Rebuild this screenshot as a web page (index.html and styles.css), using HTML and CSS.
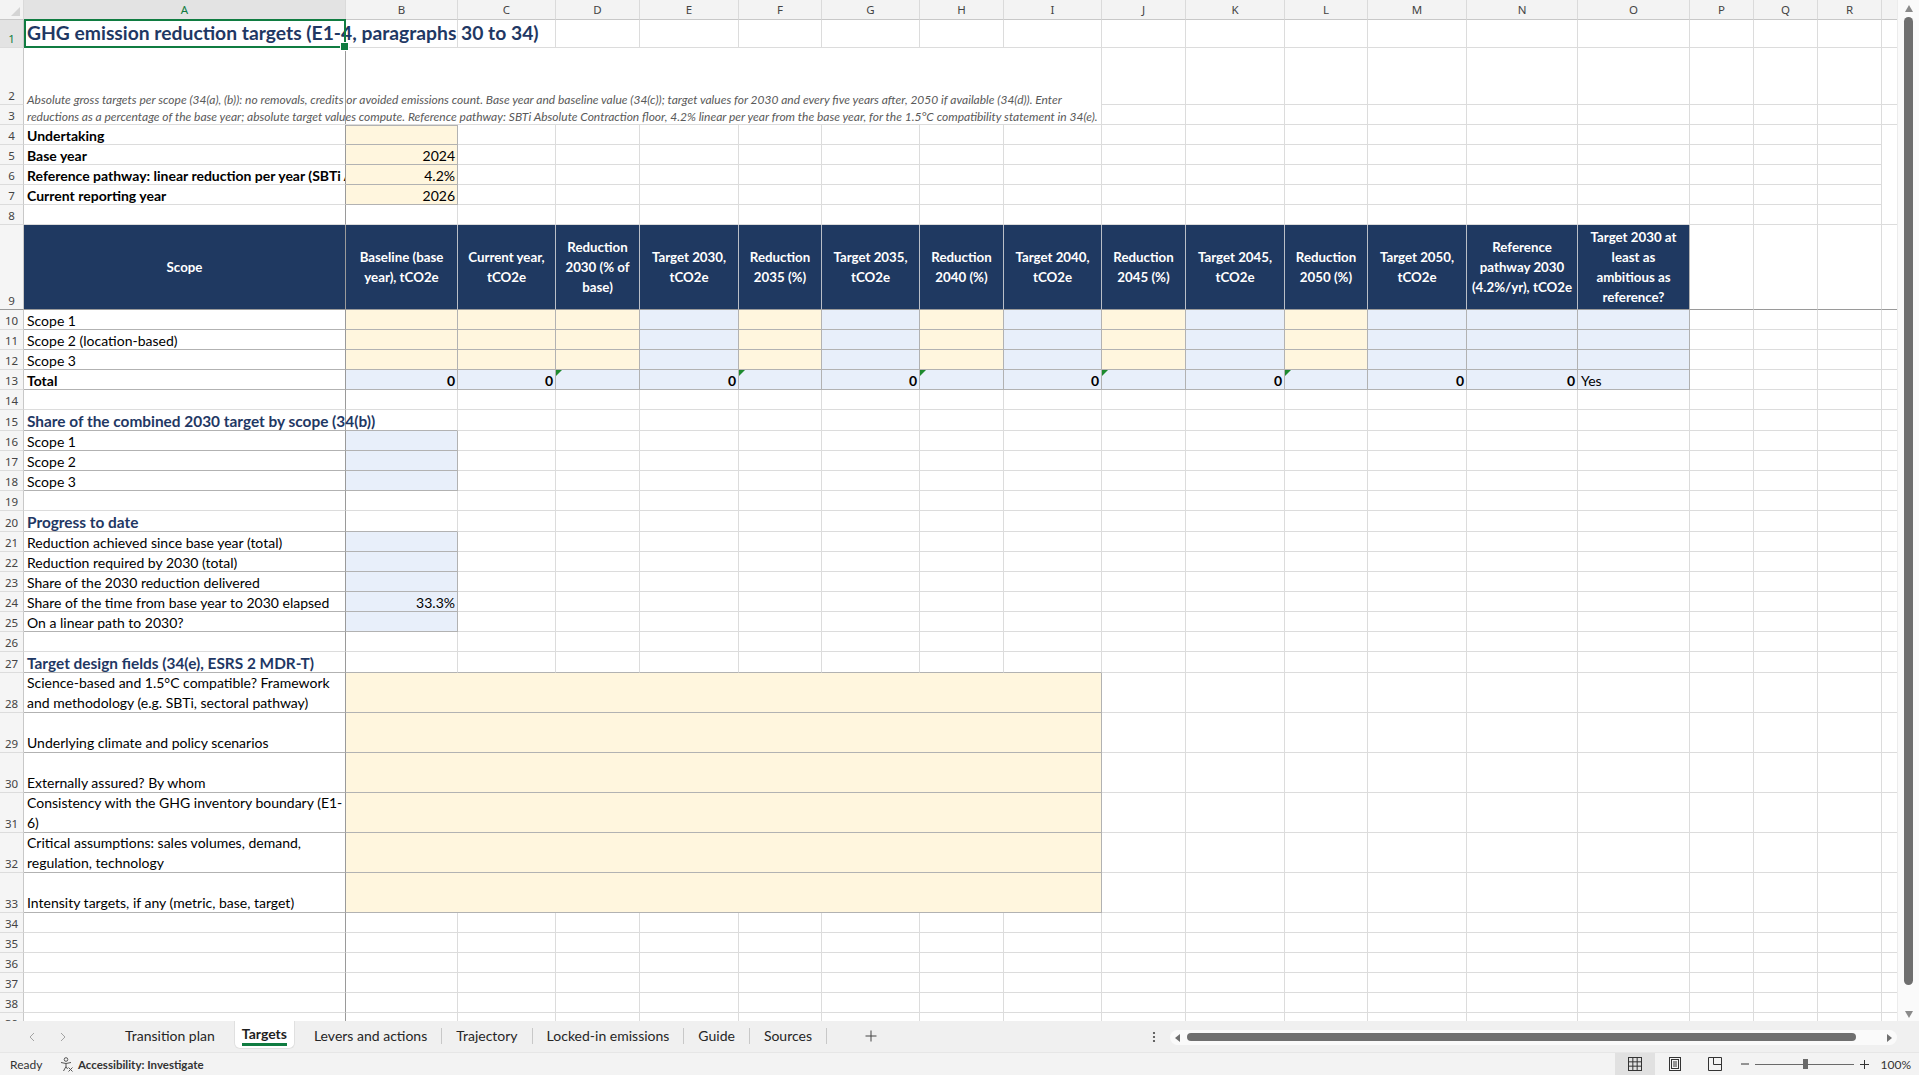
FILE: index.html
```html
<!DOCTYPE html>
<html lang="en">
<head>
<meta charset="utf-8">
<title>Targets</title>
<link rel="stylesheet" href="styles.css">
</head>
<body>
<div class="app">
  <div class="top">
    <div class="sheetwrap">
      <table class="sheet">
        <colgroup>
          <col class="c-rn"><col class="c-a"><col class="c-b"><col class="c-c"><col class="c-d"><col class="c-e"><col class="c-f"><col class="c-g"><col class="c-h"><col class="c-i"><col class="c-j"><col class="c-k"><col class="c-l"><col class="c-m"><col class="c-n"><col class="c-o"><col class="c-p"><col class="c-q"><col class="c-r"><col class="c-s">
        </colgroup>
        <tr class="colhdr">
          <th class="corner"><span class="selall"></span></th><th class="selc">A</th><th>B</th><th>C</th><th>D</th><th>E</th><th>F</th><th>G</th><th>H</th><th>I</th><th>J</th><th>K</th><th>L</th><th>M</th><th>N</th><th>O</th><th>P</th><th>Q</th><th>R</th><th>S</th>
        </tr>
        <tr class="h28">
          <th class="rn selr">1</th><td class="fz title ov sel">GHG emission reduction targets (E1-4, paragraphs 30 to 34)</td><td></td><td></td><td></td><td></td><td></td><td></td><td></td><td></td><td></td><td></td><td></td><td></td><td></td><td></td><td></td><td></td><td></td><td></td>
        </tr>
        <tr class="h57">
          <th class="rn">2</th><td class="note" colspan="9" rowspan="2"><span class="notetext">Absolute gross targets per scope (34(a), (b)): no removals, credits or avoided emissions count. Base year and baseline value (34(c)); target values for 2030 and every five years after, 2050 if available (34(d)). Enter<br>reductions as a percentage of the base year; absolute target values compute. Reference pathway: SBTi Absolute Contraction floor, 4.2% linear per year from the base year, for the 1.5°C compatibility statement in 34(e).</span></td><td></td><td></td><td></td><td></td><td></td><td></td><td></td><td></td><td></td><td></td>
        </tr>
        <tr class="h20">
          <th class="rn">3</th><td></td><td></td><td></td><td></td><td></td><td></td><td></td><td></td><td></td><td></td>
        </tr>
        <tr class="h20">
          <th class="rn">4</th><td class="fz b">Undertaking</td><td class="y bx bt"></td><td></td><td></td><td></td><td></td><td></td><td></td><td></td><td></td><td></td><td></td><td></td><td></td><td></td><td></td><td></td><td></td>
        </tr>
        <tr class="h20">
          <th class="rn">5</th><td class="fz b">Base year</td><td class="y bx num">2024</td><td></td><td></td><td></td><td></td><td></td><td></td><td></td><td></td><td></td><td></td><td></td><td></td><td></td><td></td><td></td><td></td>
        </tr>
        <tr class="h20">
          <th class="rn">6</th><td class="fz b">Reference pathway: linear reduction per year (SBTi Absolute Contraction)</td><td class="y bx num">4.2%</td><td></td><td></td><td></td><td></td><td></td><td></td><td></td><td></td><td></td><td></td><td></td><td></td><td></td><td></td><td></td><td></td>
        </tr>
        <tr class="h20">
          <th class="rn">7</th><td class="fz b">Current reporting year</td><td class="y bx num">2026</td><td></td><td></td><td></td><td></td><td></td><td></td><td></td><td></td><td></td><td></td><td></td><td></td><td></td><td></td><td></td><td></td>
        </tr>
        <tr class="h20">
          <th class="rn">8</th><td class="fz"></td><td></td><td></td><td></td><td></td><td></td><td></td><td></td><td></td><td></td><td></td><td></td><td></td><td></td><td></td><td></td><td></td><td></td><td></td>
        </tr>
        <tr class="h85 frz">
          <th class="rn">9</th><td class="hd fz">Scope</td><td class="hd">Baseline (base<br>year), tCO2e</td><td class="hd">Current year,<br>tCO2e</td><td class="hd">Reduction<br>2030 (% of<br>base)</td><td class="hd">Target 2030,<br>tCO2e</td><td class="hd">Reduction<br>2035 (%)</td><td class="hd">Target 2035,<br>tCO2e</td><td class="hd">Reduction<br>2040 (%)</td><td class="hd">Target 2040,<br>tCO2e</td><td class="hd">Reduction<br>2045 (%)</td><td class="hd">Target 2045,<br>tCO2e</td><td class="hd">Reduction<br>2050 (%)</td><td class="hd">Target 2050,<br>tCO2e</td><td class="hd">Reference<br>pathway 2030<br>(4.2%/yr), tCO2e</td><td class="hd hd-last">Target 2030 at<br>least as<br>ambitious as<br>reference?</td><td></td><td></td><td></td><td></td>
        </tr>
        <tr class="h20">
          <th class="rn">10</th><td class="fz bx">Scope 1</td><td class="y bx"></td><td class="y bx"></td><td class="y bx"></td><td class="bl bx"></td><td class="y bx"></td><td class="bl bx"></td><td class="y bx"></td><td class="bl bx"></td><td class="y bx"></td><td class="bl bx"></td><td class="y bx"></td><td class="bl bx"></td><td class="bl bx"></td><td class="bl bx"></td><td></td><td></td><td></td><td></td>
        </tr>
        <tr class="h20">
          <th class="rn">11</th><td class="fz bx">Scope 2 (location-based)</td><td class="y bx"></td><td class="y bx"></td><td class="y bx"></td><td class="bl bx"></td><td class="y bx"></td><td class="bl bx"></td><td class="y bx"></td><td class="bl bx"></td><td class="y bx"></td><td class="bl bx"></td><td class="y bx"></td><td class="bl bx"></td><td class="bl bx"></td><td class="bl bx"></td><td></td><td></td><td></td><td></td>
        </tr>
        <tr class="h20">
          <th class="rn">12</th><td class="fz bx">Scope 3</td><td class="y bx"></td><td class="y bx"></td><td class="y bx"></td><td class="bl bx"></td><td class="y bx"></td><td class="bl bx"></td><td class="y bx"></td><td class="bl bx"></td><td class="y bx"></td><td class="bl bx"></td><td class="y bx"></td><td class="bl bx"></td><td class="bl bx"></td><td class="bl bx"></td><td></td><td></td><td></td><td></td>
        </tr>
        <tr class="h20">
          <th class="rn">13</th><td class="fz bx b">Total</td><td class="bl bx num b">0</td><td class="bl bx num b">0</td><td class="bl bx err"></td><td class="bl bx num b">0</td><td class="bl bx err"></td><td class="bl bx num b">0</td><td class="bl bx err"></td><td class="bl bx num b">0</td><td class="bl bx err"></td><td class="bl bx num b">0</td><td class="bl bx err"></td><td class="bl bx num b">0</td><td class="bl bx num b">0</td><td class="bl bx">Yes</td><td></td><td></td><td></td><td></td>
        </tr>
        <tr class="h20">
          <th class="rn">14</th><td class="fz"></td><td></td><td></td><td></td><td></td><td></td><td></td><td></td><td></td><td></td><td></td><td></td><td></td><td></td><td></td><td></td><td></td><td></td><td></td>
        </tr>
        <tr class="h21">
          <th class="rn">15</th><td class="fz sec ov bbx">Share of the combined 2030 target by scope (34(b))</td><td class="bbx"></td><td></td><td></td><td></td><td></td><td></td><td></td><td></td><td></td><td></td><td></td><td></td><td></td><td></td><td></td><td></td><td></td><td></td>
        </tr>
        <tr class="h20">
          <th class="rn">16</th><td class="fz bx">Scope 1</td><td class="bl bx"></td><td></td><td></td><td></td><td></td><td></td><td></td><td></td><td></td><td></td><td></td><td></td><td></td><td></td><td></td><td></td><td></td><td></td>
        </tr>
        <tr class="h20">
          <th class="rn">17</th><td class="fz bx">Scope 2</td><td class="bl bx"></td><td></td><td></td><td></td><td></td><td></td><td></td><td></td><td></td><td></td><td></td><td></td><td></td><td></td><td></td><td></td><td></td><td></td>
        </tr>
        <tr class="h20">
          <th class="rn">18</th><td class="fz bx">Scope 3</td><td class="bl bx"></td><td></td><td></td><td></td><td></td><td></td><td></td><td></td><td></td><td></td><td></td><td></td><td></td><td></td><td></td><td></td><td></td><td></td>
        </tr>
        <tr class="h20">
          <th class="rn">19</th><td class="fz"></td><td></td><td></td><td></td><td></td><td></td><td></td><td></td><td></td><td></td><td></td><td></td><td></td><td></td><td></td><td></td><td></td><td></td><td></td>
        </tr>
        <tr class="h21">
          <th class="rn">20</th><td class="fz sec bbx">Progress to date</td><td class="bbx"></td><td></td><td></td><td></td><td></td><td></td><td></td><td></td><td></td><td></td><td></td><td></td><td></td><td></td><td></td><td></td><td></td><td></td>
        </tr>
        <tr class="h20">
          <th class="rn">21</th><td class="fz bx">Reduction achieved since base year (total)</td><td class="bl bx"></td><td></td><td></td><td></td><td></td><td></td><td></td><td></td><td></td><td></td><td></td><td></td><td></td><td></td><td></td><td></td><td></td><td></td>
        </tr>
        <tr class="h20">
          <th class="rn">22</th><td class="fz bx">Reduction required by 2030 (total)</td><td class="bl bx"></td><td></td><td></td><td></td><td></td><td></td><td></td><td></td><td></td><td></td><td></td><td></td><td></td><td></td><td></td><td></td><td></td><td></td>
        </tr>
        <tr class="h20">
          <th class="rn">23</th><td class="fz bx">Share of the 2030 reduction delivered</td><td class="bl bx"></td><td></td><td></td><td></td><td></td><td></td><td></td><td></td><td></td><td></td><td></td><td></td><td></td><td></td><td></td><td></td><td></td><td></td>
        </tr>
        <tr class="h20">
          <th class="rn">24</th><td class="fz bx">Share of the time from base year to 2030 elapsed</td><td class="bl bx num">33.3%</td><td></td><td></td><td></td><td></td><td></td><td></td><td></td><td></td><td></td><td></td><td></td><td></td><td></td><td></td><td></td><td></td><td></td>
        </tr>
        <tr class="h20">
          <th class="rn">25</th><td class="fz bx">On a linear path to 2030?</td><td class="bl bx"></td><td></td><td></td><td></td><td></td><td></td><td></td><td></td><td></td><td></td><td></td><td></td><td></td><td></td><td></td><td></td><td></td><td></td>
        </tr>
        <tr class="h20">
          <th class="rn">26</th><td class="fz"></td><td></td><td></td><td></td><td></td><td></td><td></td><td></td><td></td><td></td><td></td><td></td><td></td><td></td><td></td><td></td><td></td><td></td><td></td>
        </tr>
        <tr class="h21">
          <th class="rn">27</th><td class="fz sec bbx">Target design fields (34(e), ESRS 2 MDR-T)</td><td class="bbx"></td><td class="bbx"></td><td class="bbx"></td><td class="bbx"></td><td class="bbx"></td><td class="bbx"></td><td class="bbx"></td><td class="bbx"></td><td></td><td></td><td></td><td></td><td></td><td></td><td></td><td></td><td></td><td></td>
        </tr>
        <tr class="h40">
          <th class="rn">28</th><td class="fz bx wrap">Science-based and 1.5°C compatible? Framework<br>and methodology (e.g. SBTi, sectoral pathway)</td><td class="y bx" colspan="8"></td><td></td><td></td><td></td><td></td><td></td><td></td><td></td><td></td><td></td><td></td>
        </tr>
        <tr class="h40">
          <th class="rn">29</th><td class="fz bx wrap">Underlying climate and policy scenarios</td><td class="y bx" colspan="8"></td><td></td><td></td><td></td><td></td><td></td><td></td><td></td><td></td><td></td><td></td>
        </tr>
        <tr class="h40">
          <th class="rn">30</th><td class="fz bx wrap">Externally assured? By whom</td><td class="y bx" colspan="8"></td><td></td><td></td><td></td><td></td><td></td><td></td><td></td><td></td><td></td><td></td>
        </tr>
        <tr class="h40">
          <th class="rn">31</th><td class="fz bx wrap">Consistency with the GHG inventory boundary (E1-<br>6)</td><td class="y bx" colspan="8"></td><td></td><td></td><td></td><td></td><td></td><td></td><td></td><td></td><td></td><td></td>
        </tr>
        <tr class="h40">
          <th class="rn">32</th><td class="fz bx wrap">Critical assumptions: sales volumes, demand,<br>regulation, technology</td><td class="y bx" colspan="8"></td><td></td><td></td><td></td><td></td><td></td><td></td><td></td><td></td><td></td><td></td>
        </tr>
        <tr class="h40">
          <th class="rn">33</th><td class="fz bx wrap">Intensity targets, if any (metric, base, target)</td><td class="y bx" colspan="8"></td><td></td><td></td><td></td><td></td><td></td><td></td><td></td><td></td><td></td><td></td>
        </tr>
        <tr class="h20">
          <th class="rn">34</th><td class="fz"></td><td></td><td></td><td></td><td></td><td></td><td></td><td></td><td></td><td></td><td></td><td></td><td></td><td></td><td></td><td></td><td></td><td></td><td></td>
        </tr>
        <tr class="h20">
          <th class="rn">35</th><td class="fz"></td><td></td><td></td><td></td><td></td><td></td><td></td><td></td><td></td><td></td><td></td><td></td><td></td><td></td><td></td><td></td><td></td><td></td><td></td>
        </tr>
        <tr class="h20">
          <th class="rn">36</th><td class="fz"></td><td></td><td></td><td></td><td></td><td></td><td></td><td></td><td></td><td></td><td></td><td></td><td></td><td></td><td></td><td></td><td></td><td></td><td></td>
        </tr>
        <tr class="h20">
          <th class="rn">37</th><td class="fz"></td><td></td><td></td><td></td><td></td><td></td><td></td><td></td><td></td><td></td><td></td><td></td><td></td><td></td><td></td><td></td><td></td><td></td><td></td>
        </tr>
        <tr class="h20">
          <th class="rn">38</th><td class="fz"></td><td></td><td></td><td></td><td></td><td></td><td></td><td></td><td></td><td></td><td></td><td></td><td></td><td></td><td></td><td></td><td></td><td></td><td></td>
        </tr>
        <tr class="h20">
          <th class="rn">39</th><td class="fz"></td><td></td><td></td><td></td><td></td><td></td><td></td><td></td><td></td><td></td><td></td><td></td><td></td><td></td><td></td><td></td><td></td><td></td><td></td>
        </tr>
      </table>
    </div>
    <div class="vscroll">
      <span class="tri-up"></span>
      <div class="vthumb"></div>
      <div class="flex1"></div>
      <span class="tri-down"></span>
    </div>
  </div>

  <div class="tabbar">
    <div class="navarrows">
      <svg width="6" height="10" viewBox="0 0 6 10"><polyline points="5,1 1,5 5,9" fill="none" stroke="#a3a3a3" stroke-width="1"/></svg>
      <svg width="6" height="10" viewBox="0 0 6 10"><polyline points="1,1 5,5 1,9" fill="none" stroke="#a3a3a3" stroke-width="1"/></svg>
    </div>
    <div class="tabs">
      <div class="tab">Transition plan</div>
      <div class="tab active"><span class="tlabel">Targets</span></div>
      <div class="tab sep">Levers and actions</div>
      <div class="tab sep">Trajectory</div>
      <div class="tab sep">Locked-in emissions</div>
      <div class="tab sep">Guide</div>
      <div class="tab sep">Sources</div>
    </div>
    <div class="addtab">
      <svg width="12" height="12" viewBox="0 0 12 12"><path d="M6 0.5V11.5M0.5 6H11.5" stroke="#444" stroke-width="1"/></svg>
    </div>
    <div class="flex1"></div>
    <div class="dots">
      <svg width="4" height="12" viewBox="0 0 4 12"><circle cx="2" cy="2" r="1.1" fill="#444"/><circle cx="2" cy="6" r="1.1" fill="#444"/><circle cx="2" cy="10" r="1.1" fill="#444"/></svg>
    </div>
    <div class="hscroll">
      <span class="tri-left"></span>
      <div class="hthumb"></div>
      <span class="tri-right"></span>
    </div>
  </div>

  <div class="status">
    <span class="ready">Ready</span>
    <span class="acc">
      <svg width="15" height="15" viewBox="0 0 15 15" fill="none" stroke="#555" stroke-width="1"><circle cx="7" cy="2.5" r="1.8"/><path d="M2 5.5L7 6.5L12 5.5M7 6.5V9.5M7 9.5L4.5 14M7 9.5L8.5 12"/><path d="M9.5 10.5L13.5 14.5M13.5 10.5L9.5 14.5"/></svg>
      <span>Accessibility: Investigate</span>
    </span>
    <div class="flex1"></div>
    <span class="vbtn on">
      <svg width="14" height="14" viewBox="0 0 14 14" fill="none" stroke="#333" stroke-width="1"><rect x="0.5" y="0.5" width="13" height="13"/><path d="M4.83 0.5V13.5M9.17 0.5V13.5M0.5 4.83H13.5M0.5 9.17H13.5"/></svg>
    </span>
    <span class="vbtn">
      <svg width="14" height="14" viewBox="0 0 14 14" fill="none" stroke="#333" stroke-width="1"><rect x="1.5" y="0.5" width="11" height="13"/><rect x="3.5" y="2.5" width="7" height="9"/><path d="M5 5H9M5 7H9M5 9H9"/></svg>
    </span>
    <span class="vbtn">
      <svg width="14" height="14" viewBox="0 0 14 14" fill="none" stroke="#333" stroke-width="1"><path d="M0.5 0.5H13.5V13.5H0.5Z"/><path d="M5.5 0.5V7.5H13.5"/></svg>
    </span>
    <div class="zoomctl">
      <svg width="8" height="8" viewBox="0 0 8 8"><path d="M0 4H8" stroke="#333" stroke-width="1"/></svg>
      <div class="slider"><span class="knob"></span></div>
      <svg width="9" height="9" viewBox="0 0 9 9"><path d="M0 4.5H9M4.5 0V9" stroke="#333" stroke-width="1"/></svg>
      <span class="pct">100%</span>
    </div>
  </div>
</div>
</body>
</html>
```

FILE: styles.css
```css
* { box-sizing: border-box; }
html, body { margin: 0; padding: 0; }
body {
  width: 1919px;
  height: 1075px;
  overflow: hidden;
  background: #ffffff;
  font-family: Lato, "Noto Sans", sans-serif;
}
.app { display: flex; flex-direction: column; height: 1075px; }
.top { display: flex; height: 1021px; }
.sheetwrap { width: 1897px; height: 1021px; overflow: hidden; }
.flex1 { flex: 1; }

/* ---------- sheet ---------- */
.sheet {
  border-spacing: 0;
  table-layout: fixed;
  width: 1946px;
  font-family: Lato, "Liberation Sans", sans-serif;
  font-size: 14px;
  color: #000;
}
.c-rn { width: 24px; }
.c-a { width: 322px; }
.c-b { width: 112px; }
.c-c { width: 98px; }
.c-d { width: 84px; }
.c-e { width: 99px; }
.c-f { width: 83px; }
.c-g { width: 98px; }
.c-h { width: 84px; }
.c-i { width: 98px; }
.c-j { width: 84px; }
.c-k { width: 99px; }
.c-l { width: 83px; }
.c-m { width: 99px; }
.c-n { width: 111px; }
.c-o { width: 112px; }
.c-p, .c-q, .c-r, .c-s { width: 64px; }

.h20 { height: 20px; }
.h21 { height: 21px; }
.h28 { height: 28px; }
.h40 { height: 40px; }
.h57 { height: 57px; }
.h85 { height: 85px; }

.sheet td {
  border-right: 1px solid #dcdcdc;
  border-bottom: 1px solid #dcdcdc;
  padding: 0 3px 0 3px;
  vertical-align: bottom;
  white-space: nowrap;
  overflow: hidden;
  line-height: 16px;
}
.colhdr { height: 20px; }
.colhdr th {
  background: #f3f3f3;
  border-right: 1px solid #dadada;
  border-bottom: 1px solid #c8c8c8;
  font-family: "Noto Sans", sans-serif;
  font-weight: 400;
  font-size: 11.5px;
  color: #444;
  text-align: center;
  vertical-align: middle;
  padding: 0;
  line-height: 18px;
}
.colhdr th.corner { position: relative; background: #f3f3f3; }
.selall {
  position: absolute;
  right: 3px;
  bottom: 3px;
  width: 0;
  height: 0;
  border-left: 9px solid transparent;
  border-bottom: 9px solid #d4d4d4;
}
.colhdr th.selc { background: #e3e3e3; color: #107c41; }
th.rn {
  background: #f5f5f5;
  border-right: 1px solid #c8c8c8;
  border-bottom: 1px solid #dcdcdc;
  font-family: "Noto Sans", sans-serif;
  font-weight: 400;
  font-size: 11.5px;
  color: #444;
  text-align: center;
  vertical-align: bottom;
  padding: 0;
  line-height: 16px;
}
th.selr { color: #107c41; background: #e3e3e3; }

/* freeze panes */
.sheet td.fz { border-right-color: #9a9a9a; }
.frz td, .frz th { border-bottom-color: #9a9a9a; }

.sheet td.ov { overflow: visible; }
.b { font-weight: 700; }
.sheet td.num { text-align: right; padding-right: 2px; }
.y { background: #fff6de; }
.bl { background: #e8effa; }
.sheet td.bx { border-right-color: #b2b2b2; border-bottom-color: #b2b2b2; }
.sheet td.fz.bx { border-right-color: #9a9a9a; }
.sheet td.bbx { border-bottom-color: #b2b2b2; }
.sheet td.bt { border-top: 1px solid #b2b2b2; }

.sheet td.title {
  font-size: 19.3px;
  font-weight: 700;
  color: #1f3864;
  line-height: 22px;
  padding-bottom: 3px;
}
.sel { position: relative; }
.sel::after {
  content: "";
  position: absolute;
  left: 0;
  top: -1px;
  right: -1px;
  bottom: -1px;
  border: 2px solid #107c41;
  pointer-events: none;
}
.sel::before {
  content: "";
  position: absolute;
  right: -4px;
  bottom: -4px;
  width: 7px;
  height: 7px;
  background: #107c41;
  border: 1px solid #fff;
  z-index: 2;
}
.sheet td.note {
  position: relative;
  font-style: italic;
  font-size: 12px;
  color: #595959;
  line-height: 17px;
}
.notetext { display: block; margin-bottom: -1px; }
.note::before {
  content: "";
  position: absolute;
  left: 321px;
  top: 0;
  bottom: 0;
  width: 1px;
  background: #9a9a9a;
}
.sheet td.sec {
  font-size: 15.4px;
  font-weight: 700;
  color: #1f3864;
  line-height: 17px;
}
.sheet td.wrap { line-height: 19.5px; }

.sheet td.hd {
  background: #1f3961;
  color: #ffffff;
  font-weight: 700;
  font-size: 13.3px;
  text-align: center;
  vertical-align: middle;
  white-space: nowrap;
  line-height: 20px;
  border-right: 1px solid #b9bec7;
  padding: 0 2px;
}
.sheet td.hd.fz { border-right-color: #9a9a9a; }
.sheet td.hd-last { border-right-color: #b2b2b2; }

.err { position: relative; }
.err::before {
  content: "";
  position: absolute;
  left: 0;
  top: 0;
  width: 0;
  height: 0;
  border-top: 6px solid #1d8a2e;
  border-right: 6px solid transparent;
}

/* ---------- vertical scrollbar ---------- */
.vscroll {
  width: 22px;
  height: 1021px;
  background: #fafafa;
  border-left: 1px solid #ececec;
  display: flex;
  flex-direction: column;
  align-items: center;
}
.tri-up {
  margin-top: 5px;
  width: 0; height: 0;
  border-left: 4px solid transparent;
  border-right: 4px solid transparent;
  border-bottom: 7px solid #8a8a8a;
}
.vthumb {
  margin-top: 5px;
  width: 9px;
  height: 968px;
  border-radius: 5px;
  background: #6f6f6f;
}
.tri-down {
  margin-bottom: 3px;
  width: 0; height: 0;
  border-left: 4px solid transparent;
  border-right: 4px solid transparent;
  border-top: 7px solid #8a8a8a;
}

/* ---------- tab bar ---------- */
.tabbar {
  height: 31px;
  background: #f0f0f0;
  display: flex;
  align-items: stretch;
  font-family: Lato, "Noto Sans", sans-serif;
  font-size: 14px;
  color: #262626;
}
.navarrows {
  width: 111px;
  display: flex;
  align-items: center;
  gap: 25px;
  padding-left: 29px;
}
.tabs { display: flex; align-items: stretch; }
.tab {
  display: flex;
  align-items: center;
  padding: 0 14px 2px 14px;
  position: relative;
}
.tab.sep::after {
  content: "";
  position: absolute;
  right: 0;
  top: 7px;
  height: 16px;
  width: 1px;
  background: #c8c8c8;
}
.tab.sep { padding-right: 15px; }
.tab.active {
  background: #ffffff;
  margin: 0 5px;
  padding: 0 7px 2px 7px;
  height: 28px;
  border: 1px solid #e0e0e0;
  border-top: none;
  border-radius: 0 0 6px 6px;
  font-weight: 700;
  color: #1f1f1f;
}
.tlabel {
  display: inline-block;
  border-bottom: 3px solid #107c41;
  line-height: 18px;
  padding-top: 3px;
}
.addtab {
  display: flex;
  align-items: center;
  margin-left: 38px;
  padding-bottom: 2px;
}
.dots {
  display: flex;
  align-items: center;
  padding-right: 14px;
}
.hscroll {
  width: 727px;
  height: 15px;
  margin-top: 9px;
  margin-right: 22px;
  background: #fafafa;
  border-radius: 8px;
  display: flex;
  align-items: center;
  padding: 0 5px;
}
.tri-left {
  width: 0; height: 0;
  border-top: 4px solid transparent;
  border-bottom: 4px solid transparent;
  border-right: 5px solid #6f6f6f;
}
.hthumb {
  width: 669px;
  height: 8px;
  margin: 0 0 1px 7px;
  background: #6f6f6f;
  border-radius: 4px;
}
.tri-right {
  margin-left: auto;
  width: 0; height: 0;
  border-top: 4px solid transparent;
  border-bottom: 4px solid transparent;
  border-left: 5px solid #6f6f6f;
}

/* ---------- status bar ---------- */
.status {
  height: 23px;
  background: #f3f3f3;
  border-top: 1px solid #e6e6e6;
  display: flex;
  align-items: stretch;
  font-family: Lato, "Noto Sans", sans-serif;
  font-size: 12px;
  color: #333;
}
.ready { display: flex; align-items: center; padding-left: 10px; width: 59px; }
.acc { display: flex; align-items: center; gap: 4px; font-weight: 700; font-size: 11.5px; }
.vbtn {
  width: 40px;
  display: flex;
  align-items: center;
  justify-content: center;
}
.vbtn.on { background: #e1e1e1; }
.zoomctl {
  display: flex;
  align-items: center;
  padding-left: 6px;
  padding-right: 8px;
}
.slider {
  position: relative;
  width: 99px;
  height: 1px;
  background: #6a6a6a;
  margin: 0 6px;
}
.knob {
  position: absolute;
  left: 48px;
  top: -5px;
  width: 5px;
  height: 10px;
  background: #6a6a6a;
}
.pct { margin-left: 12px; font-size: 12px; }
```
